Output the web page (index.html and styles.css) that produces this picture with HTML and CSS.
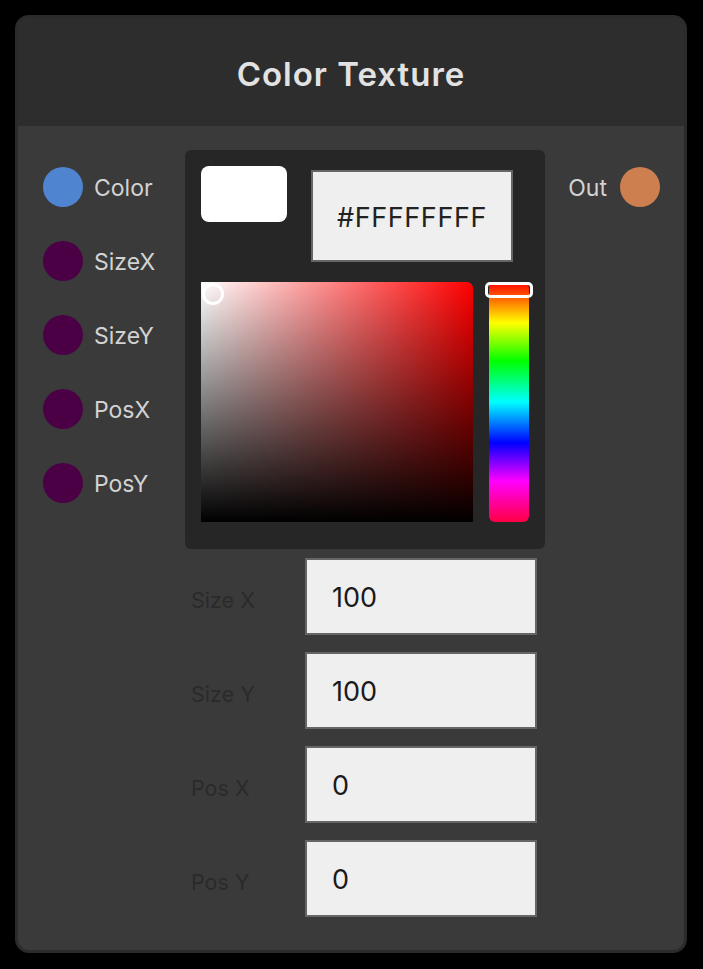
FILE: index.html
```html
<!DOCTYPE html>
<html>
<head>
<meta charset="utf-8">
<link rel="stylesheet" href="styles.css">
</head>
<body>
<div class="node">
  <div class="header"><span class="title">Color Texture</span></div>
  <div class="body">
    <div class="inputs">
      <div class="port"><span class="dot dot-color"></span><span class="port-label">Color</span></div>
      <div class="port"><span class="dot dot-num"></span><span class="port-label">SizeX</span></div>
      <div class="port"><span class="dot dot-num"></span><span class="port-label">SizeY</span></div>
      <div class="port"><span class="dot dot-num"></span><span class="port-label">PosX</span></div>
      <div class="port"><span class="dot dot-num"></span><span class="port-label">PosY</span></div>
    </div>
    <div class="center">
      <div class="picker">
        <div class="picker-top">
          <div class="swatch"></div>
          <div class="hex">#FFFFFFFF</div>
        </div>
        <div class="picker-main">
          <div class="sat"><span class="sat-cursor"></span></div>
          <div class="hue"><span class="hue-handle"></span></div>
        </div>
      </div>
      <div class="fields">
        <div class="field"><span class="field-label">Size X</span><div class="field-input">100</div></div>
        <div class="field"><span class="field-label">Size Y</span><div class="field-input">100</div></div>
        <div class="field"><span class="field-label">Pos X</span><div class="field-input">0</div></div>
        <div class="field"><span class="field-label">Pos Y</span><div class="field-input">0</div></div>
      </div>
    </div>
    <div class="outputs">
      <div class="port port-out"><span class="port-label">Out</span><span class="dot dot-out"></span></div>
    </div>
  </div>
</div>
</body>
</html>
```
FILE: styles.css
```css
html, body {
  margin: 0;
  padding: 0;
  background: #000;
}
body {
  width: 703px;
  height: 969px;
  font-family: Inter, "Noto Sans", sans-serif;
}
.node {
  position: relative;
  margin: 15px 0 0 15px;
  width: 672px;
  height: 938px;
  box-sizing: border-box;
  border: 3px solid #2b2b2b;
  border-radius: 14px;
  overflow: hidden;
  background: #3a3a3a;
  display: flex;
  flex-direction: column;
}
.header {
  height: 108px;
  background: #2d2d2d;
  display: flex;
  align-items: center;
  justify-content: center;
  flex: none;
}
.title {
  color: #e2e2e2;
  font-size: 33px;
  font-weight: 600;
  letter-spacing: 1px;
  margin-top: 4px;
}
.body {
  flex: 1;
  display: flex;
  padding: 24px 24px 0 25px;
}
.inputs {
  width: 142px;
  display: flex;
  flex-direction: column;
  gap: 34px;
  margin-top: 17px;
}
.port {
  display: flex;
  align-items: center;
  height: 40px;
}
.dot {
  width: 40px;
  height: 40px;
  border-radius: 50%;
  flex: none;
}
.dot-color { background: #4f84d1; }
.dot-num { background: #4b0046; }
.dot-out { background: #cd7f4f; }
.port-label {
  color: #d2d2d2;
  font-size: 23px;
  margin-left: 11px;
  margin-top: 2px;
}
.port-out .port-label {
  margin-left: 0;
  margin-right: 13px;
}
.center {
  width: 360px;
  display: flex;
  flex-direction: column;
}
.picker {
  background: #262626;
  border-radius: 6px;
  padding: 16px 16px 27px 16px;
  display: flex;
  flex-direction: column;
  gap: 20px;
}
.picker-top {
  display: flex;
  align-items: flex-start;
  height: 96px;
}
.swatch {
  width: 86px;
  height: 56px;
  background: #fff;
  border-radius: 8px;
}
.hex {
  margin-left: 24px;
  margin-top: 4px;
  width: 202px;
  height: 92px;
  box-sizing: border-box;
  background: #efefef;
  border: 2px solid #666;
  display: flex;
  align-items: center;
  justify-content: center;
  color: #222;
  font-size: 27px;
  letter-spacing: 0.6px;
  padding-top: 2px;
}
.picker-main {
  display: flex;
  gap: 16px;
}
.sat {
  position: relative;
  width: 272px;
  height: 240px;
  border-radius: 0 6px 0 0;
  background: linear-gradient(to top, #000, rgba(0,0,0,0)), linear-gradient(to right, #fff, #f00);
}
.sat-cursor {
  position: absolute;
  left: 1px;
  top: 1px;
  width: 22px;
  height: 22px;
  box-sizing: border-box;
  border: 3px solid #fff;
  border-radius: 50%;
}
.hue {
  position: relative;
  width: 40px;
  height: 240px;
  border-radius: 6px;
  background: linear-gradient(to bottom, #f00 0%, #ff0 17%, #0f0 33%, #0ff 50%, #00f 67%, #f0f 83%, #f04 100%);
}
.hue-handle {
  position: absolute;
  left: -4px;
  top: 0;
  width: 48px;
  height: 16px;
  box-sizing: border-box;
  border: 3px solid #fff;
  border-radius: 5px;
}
.fields {
  display: flex;
  flex-direction: column;
  gap: 17px;
  margin-top: 9px;
}
.field {
  display: flex;
  align-items: center;
  height: 77px;
}
.field-label {
  width: 114px;
  padding-left: 6px;
  color: #2a2a2a;
  font-size: 21.5px;
  margin-top: 6px;
}
.field-input {
  width: 232px;
  height: 77px;
  box-sizing: border-box;
  background: #efefef;
  border: 2px solid #666;
  display: flex;
  align-items: center;
  padding-left: 25px;
  padding-top: 2px;
  color: #1a1a1a;
  font-size: 27px;
}
.outputs {
  flex: 1;
  display: flex;
  flex-direction: column;
  align-items: flex-end;
  margin-top: 17px;
}
```
